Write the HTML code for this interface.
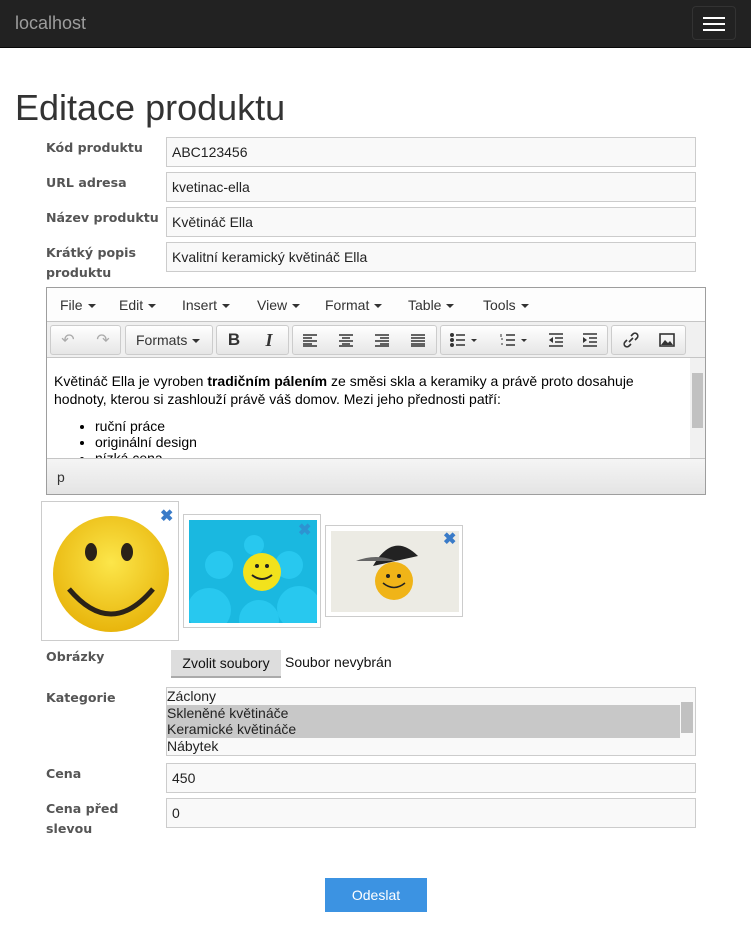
<!DOCTYPE html>
<html><head><meta charset="utf-8"><style>
*{box-sizing:border-box;margin:0;padding:0}
body{width:751px;height:929px;background:#fff;font-family:"Liberation Sans",sans-serif;position:relative;overflow:hidden;color:#333}
.a{position:absolute}
.nav{left:0;top:0;width:751px;height:48px;background:#222;border-bottom:1px solid #080808}
.lbl{position:absolute;left:46px;font-family:"DejaVu Sans",sans-serif;font-weight:bold;font-size:12.6px;color:#555;line-height:20px;margin-top:1px}
.inp{position:absolute;left:166px;width:530px;height:30px;border:1px solid #ccc;background:#f9f9f9;font-size:14px;padding:0 5px;line-height:28px;color:#222}
.menu span{position:absolute;white-space:nowrap;font-size:14px;color:#333}
.car{display:inline-block;width:0;height:0;border-left:4px solid transparent;border-right:4px solid transparent;border-top:4px solid #333;vertical-align:middle;margin-left:5px}
.grp{position:absolute;top:325px;height:30px;border:1px solid #ccc;border-radius:3px;background:linear-gradient(#fff,#e6e6e6);white-space:nowrap}
.btn{position:absolute;top:0;height:28px;width:34px;display:flex;align-items:center;justify-content:center}
.x{position:absolute;color:#3a7bc8;font-size:16px;font-weight:bold;line-height:16px}
</style></head><body>
<div class="a nav"></div>
<div class="a" style="left:15px;top:13px;font-size:18px;color:#9d9d9d">localhost</div>
<div class="a" style="left:692px;top:6px;width:44px;height:34px;border:1px solid #333;border-radius:4px">
 <div class="a" style="left:10px;top:10px;width:22px;height:2px;background:#fff"></div>
 <div class="a" style="left:10px;top:16px;width:22px;height:2px;background:#fff"></div>
 <div class="a" style="left:10px;top:22px;width:22px;height:2px;background:#fff"></div>
</div>
<div class="a" style="left:15px;top:87px;font-size:36px;color:#333">Editace produktu</div>

<div class="lbl" style="top:137px">Kód produktu</div><div class="inp" style="top:137px">ABC123456</div>
<div class="lbl" style="top:172px">URL adresa</div><div class="inp" style="top:172px">kvetinac-ella</div>
<div class="lbl" style="top:207px">Název produktu</div><div class="inp" style="top:207px">Květináč Ella</div>
<div class="lbl" style="top:242px">Krátký popis<br>produktu</div><div class="inp" style="top:242px">Kvalitní keramický květináč Ella</div>

<div class="a" style="left:46px;top:287px;width:660px;height:208px;border:1px solid #9e9e9e;background:#fff"></div>
<div class="a" style="left:47px;top:288px;width:658px;height:34px;background:#fdfdfd;border-bottom:1px solid #c5c5c5"></div>
<div class="a menu" style="left:60px;top:297px;font-size:14px">
<span style="left:0">File<i class="car"></i></span>
<span style="left:59px">Edit<i class="car"></i></span>
<span style="left:122px">Insert<i class="car"></i></span>
<span style="left:197px">View<i class="car"></i></span>
<span style="left:265px">Format<i class="car"></i></span>
<span style="left:348px">Table<i class="car"></i></span>
<span style="left:423px">Tools<i class="car"></i></span>
</div>
<div class="a" style="left:47px;top:322px;width:658px;height:36px;background:#f0f0f0;border-bottom:1px solid #c5c5c5"></div>
<div class="grp" style="left:50px;width:71px"><div class="btn" style="left:0;color:#aaa">&#8630;</div><div class="btn" style="left:35px;color:#aaa">&#8631;</div></div>
<div class="grp" style="left:125px;width:88px;font-size:14px;padding:6px 0 0 10px">Formats<i class="car"></i></div>
<div class="grp" style="left:216px;width:73px"><div class="btn" style="left:0;font-weight:bold;font-size:17px;color:#333">B</div><div class="btn" style="left:35px;font-style:italic;font-weight:bold;font-family:'Liberation Serif';font-size:18px;color:#333">I</div></div>
<div class="grp" style="left:292px;width:145px">
 <div class="btn" style="left:0"><svg width="16" height="14"><path d="M1 2h14M1 5h9M1 8h14M1 11h9M1 13h14" stroke="#333" stroke-width="1.6"/></svg></div>
 <div class="btn" style="left:36px"><svg width="16" height="14"><path d="M1 2h14M4 5h8M1 8h14M4 11h8M1 13h14" stroke="#333" stroke-width="1.6"/></svg></div>
 <div class="btn" style="left:72px"><svg width="16" height="14"><path d="M1 2h14M6 5h9M1 8h14M6 11h9M1 13h14" stroke="#333" stroke-width="1.6"/></svg></div>
 <div class="btn" style="left:108px"><svg width="16" height="14"><path d="M1 2h14M1 5h14M1 8h14M1 11h14M1 13h14" stroke="#333" stroke-width="1.6"/></svg></div>
</div>
<div class="grp" style="left:440px;width:168px">
 <div class="btn" style="left:0;width:46px"><svg width="28" height="14"><circle cx="2" cy="2" r="2" fill="#333"/><circle cx="2" cy="7" r="2" fill="#333"/><circle cx="2" cy="12" r="2" fill="#333"/><path d="M6 2h9M6 7h9M6 12h9" stroke="#333" stroke-width="1.6"/><path d="M21 6l3 3 3-3z" fill="#333"/></svg></div>
 <div class="btn" style="left:50px;width:46px"><svg width="28" height="14"><path d="M6 2h9M6 7h9M6 12h9" stroke="#333" stroke-width="1.6"/><path d="M1 1v3M1 6h2M1 11h2" stroke="#333"/><path d="M21 6l3 3 3-3z" fill="#333"/></svg></div>
 <div class="btn" style="left:98px"><svg width="16" height="14"><path d="M1 1h14M7 5h8M7 9h8M1 13h14" stroke="#333" stroke-width="1.6"/><path d="M5 4l-4 3 4 3z" fill="#333"/></svg></div>
 <div class="btn" style="left:132px"><svg width="16" height="14"><path d="M1 1h14M7 5h8M7 9h8M1 13h14" stroke="#333" stroke-width="1.6"/><path d="M1 4l4 3-4 3z" fill="#333"/></svg></div>
</div>
<div class="grp" style="left:611px;width:75px">
 <div class="btn" style="left:2px"><svg width="16" height="16"><path d="M6 10l4-4M4 8l-2 2a2.5 2.5 0 0 0 4 4l2-2M12 8l2-2a2.5 2.5 0 0 0-4-4L8 4" stroke="#333" stroke-width="1.6" fill="none"/></svg></div>
 <div class="btn" style="left:38px"><svg width="16" height="14"><rect x="1" y="1" width="14" height="12" fill="none" stroke="#333" stroke-width="1.6"/><path d="M2 12l4-5 3 3 2-2 3 4z" fill="#333"/></svg></div>
</div>
<div class="a" style="left:54px;top:372px;width:590px;font-size:14px;line-height:18px;color:#000">Květináč Ella je vyroben <b>tradičním pálením</b> ze směsi skla a keramiky a právě proto dosahuje hodnoty, kterou si zashlouží právě váš domov. Mezi jeho přednosti patří:</div>
<div class="a" style="left:47px;top:358px;width:643px;height:100px;overflow:hidden">
<ul style="position:absolute;left:48px;top:60px;font-size:14px;line-height:16px;color:#000"><li>ruční práce</li><li>originální design</li><li>nízká cena</li></ul></div>
<div class="a" style="left:690px;top:358px;width:15px;height:100px;background:#f1f1f1"><div class="a" style="left:2px;top:15px;width:11px;height:55px;background:#c1c1c1"></div></div>
<div class="a" style="left:47px;top:458px;width:658px;height:36px;background:linear-gradient(#f5f5f5,#e4e4e4);border-top:1px solid #c5c5c5;font-size:14px;padding:10px 0 0 10px">p</div>

<div class="a" style="left:41px;top:501px;width:138px;height:140px;border:1px solid #ccc;background:#fff">
<svg class="a" style="left:9px;top:12px" width="120" height="120"><defs><radialGradient id="g1" cx="0.5" cy="0.4" r="0.6"><stop offset="0" stop-color="#fce64a"/><stop offset="1" stop-color="#e8b50c"/></radialGradient></defs><circle cx="60" cy="60" r="58" fill="url(#g1)"/><ellipse cx="40" cy="38" rx="6" ry="9" fill="#2a2218"/><ellipse cx="76" cy="38" rx="6" ry="9" fill="#2a2218"/><path d="M18 75q42 50 84 0" stroke="#2a2218" stroke-width="5" fill="none"/></svg>
<div class="x" style="left:118px;top:7px">✖</div></div>
<div class="a" style="left:183px;top:514px;width:138px;height:114px;border:1px solid #ccc;background:#fff">
<svg class="a" style="left:5px;top:5px" width="128" height="103"><rect width="128" height="103" fill="#1ab8e0"/><g fill="#28c8ef"><circle cx="20" cy="90" r="22"/><circle cx="110" cy="88" r="22"/><circle cx="70" cy="100" r="20"/><circle cx="30" cy="45" r="14"/><circle cx="100" cy="45" r="14"/><circle cx="65" cy="25" r="10"/></g><circle cx="73" cy="52" r="19" fill="#f2e21c"/><path d="M63 55q10 8 20 0" stroke="#222" stroke-width="2" fill="none"/><circle cx="68" cy="46" r="2" fill="#222"/><circle cx="78" cy="46" r="2" fill="#222"/></svg>
<div class="x" style="left:114px;top:8px;opacity:.6">✖</div></div>
<div class="a" style="left:325px;top:525px;width:138px;height:92px;border:1px solid #ccc;background:#fff">
<svg class="a" style="left:5px;top:5px" width="128" height="81"><rect width="128" height="81" fill="#ecebe4"/><circle cx="63" cy="50" r="19" fill="#f0b418"/><path d="M42 35q20-35 45-10z" fill="#222"/><path d="M25 30q20-8 40 0z" fill="#666"/><circle cx="57" cy="45" r="2" fill="#222"/><circle cx="68" cy="45" r="2" fill="#222"/><path d="M52 52q11 9 22 0" stroke="#222" stroke-width="1.5" fill="none"/></svg>
<div class="x" style="left:117px;top:6px">✖</div></div>

<div class="lbl" style="top:646px">Obrázky</div>
<div class="a" style="left:171px;top:650px;width:110px;height:28px;background:#ddd;border-bottom:2px solid #aaa;font-size:14px;color:#111;text-align:center;line-height:26px">Zvolit soubory</div>
<div class="a" style="left:285px;top:654px;font-size:14px;color:#111">Soubor nevybrán</div>

<div class="lbl" style="top:687px">Kategorie</div>
<div class="a" style="left:166px;top:687px;width:530px;height:69px;border:1px solid #ccc;background:#f9f9f9;font-size:14px;line-height:16.5px;color:#222">
<div>Záclony</div><div style="background:#c8c8c8;width:513px">Skleněné květináče</div><div style="background:#c8c8c8;width:513px">Keramické květináče</div><div>Nábytek</div>
<div class="a" style="left:514px;top:14px;width:12px;height:31px;background:#c1c1c1"></div></div>

<div class="lbl" style="top:763px">Cena</div><div class="inp" style="top:763px">450</div>
<div class="lbl" style="top:798px">Cena před<br>slevou</div><div class="inp" style="top:798px">0</div>

<div class="a" style="left:325px;top:878px;width:102px;height:34px;background:#3c93e2;color:#fff;font-size:14px;text-align:center;line-height:34px">Odeslat</div>
</body></html>
